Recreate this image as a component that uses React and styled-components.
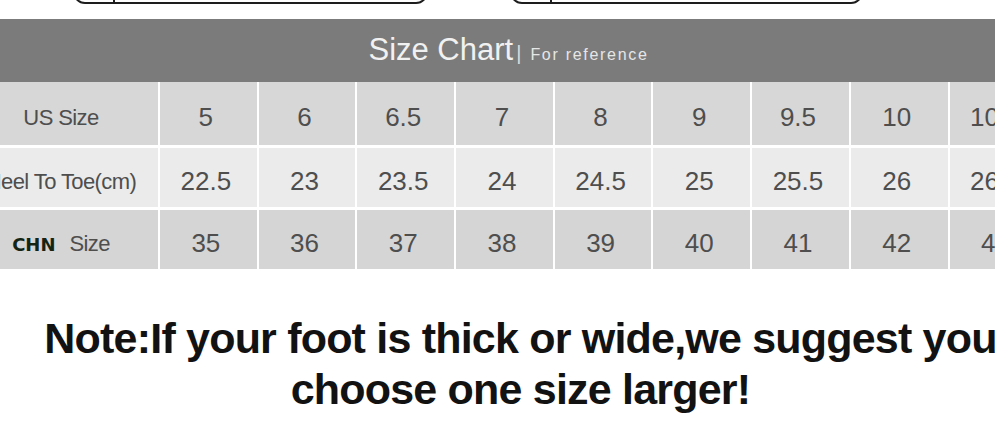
import styled, { createGlobalStyle } from "styled-components";

const GlobalStyle = createGlobalStyle`
  html, body {
    margin: 0;
    padding: 0;
    background: #ffffff;
    overflow: hidden;
  }
`;

const Page = styled.div`
  width: 1041px;
  font-family: "Liberation Sans", Arial, sans-serif;
`;

const TopStrip = styled.div`
  height: 19px;
  overflow: hidden;
  display: flex;
  align-items: flex-start;
  padding-left: 73px;
  gap: 82px;
`;

const TabBox = styled.div`
  width: ${(p) => p.$width}px;
  height: 30px;
  margin-top: -26px;
  box-sizing: border-box;
  border: 2px solid #1d1d1d;
  border-radius: 12px;
  display: flex;
`;

const TabDivider = styled.div`
  width: 38px;
  border-right: 2px solid #1d1d1d;
`;

const Header = styled.div`
  height: 63px;
  background: #7b7b7b;
  display: flex;
  justify-content: center;
  align-items: baseline;
  padding-top: 11px;
  padding-right: 24px;
  box-sizing: border-box;
  color: #f1f1f1;
`;

const Title = styled.span`
  font-size: 31px;
  line-height: 40px;
`;

const Bar = styled.span`
  font-size: 20px;
  margin: 0 9px 0 3px;
  color: #dcdcdc;
`;

const Subtitle = styled.span`
  font-size: 16px;
  letter-spacing: 1.7px;
  color: #e6e6e6;
`;

const Table = styled.div`
  margin-left: -40px;
  display: grid;
  grid-template-columns: 198px repeat(10, 96.7px);
  grid-template-rows: 63px 59px 59px;
  column-gap: 2px;
  row-gap: 3px;
  background: #ffffff;
`;

const Cell = styled.div`
  background: ${(p) => p.$bg};
  display: flex;
  align-items: center;
  justify-content: center;
  padding: ${(p) => (p.$label ? "9px 0 0 4px" : "7px 5px 0 0")};
  box-sizing: border-box;
  color: #4e4e4e;
  font-size: ${(p) => (p.$label ? 22 : 26)}px;
  letter-spacing: ${(p) => (p.$label ? -0.6 : 0)}px;
  white-space: nowrap;
`;

const Chn = styled.b`
  font-family: "DejaVu Sans", Verdana, sans-serif;
  font-size: 18px;
  letter-spacing: 0;
  color: #142414;
  margin-right: 14px;
`;

const Note = styled.p`
  margin: 44px 0 0;
  text-align: center;
  font-weight: 700;
  font-size: 43px;
  line-height: 51px;
  letter-spacing: -0.8px;
  color: #121212;
`;

const rows = [
  {
    label: "US Size",
    bg: "#d7d7d7",
    values: ["5", "6", "6.5", "7", "8", "9", "9.5", "10", "10.5", "11"],
  },
  {
    label: "Heel To Toe(cm)",
    bg: "#ebebeb",
    values: ["22.5", "23", "23.5", "24", "24.5", "25", "25.5", "26", "26.5", "27"],
  },
  {
    label: "Size",
    chn: true,
    bg: "#d5d5d5",
    values: ["35", "36", "37", "38", "39", "40", "41", "42", "43", "44"],
  },
];

export default function App() {
  return (
    <>
      <GlobalStyle />
      <Page>
        <TopStrip>
          <TabBox $width={355}>
            <TabDivider />
          </TabBox>
          <TabBox $width={353}>
            <TabDivider />
          </TabBox>
        </TopStrip>
        <Header>
          <Title>Size Chart</Title>
          <Bar>|</Bar>
          <Subtitle>For reference</Subtitle>
        </Header>
        <Table>
          {rows.map((row) => (
            <>
              <Cell key={row.label} $bg={row.bg} $label>
                {row.chn && <Chn>CHN</Chn>}
                {row.label}
              </Cell>
              {row.values.map((v, i) => (
                <Cell key={row.label + i} $bg={row.bg}>
                  {v}
                </Cell>
              ))}
            </>
          ))}
        </Table>
        <Note>
          Note:If your foot is thick or wide,we suggest you
          <br />
          choose one size larger!
        </Note>
      </Page>
    </>
  );
}
